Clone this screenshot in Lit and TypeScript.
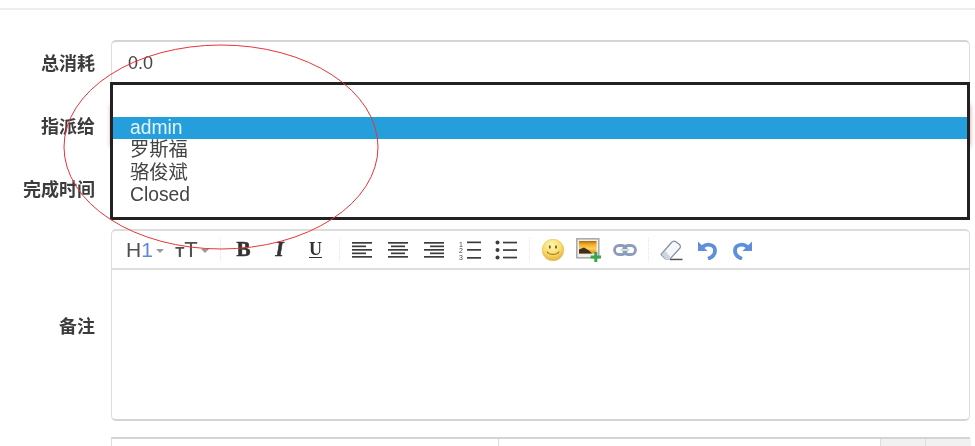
import { LitElement, html, css, svg } from "lit";
import { customElement } from "lit/decorators.js";

const line = (x: number, y: number, w: number, h = 1.7, c = "#3c3c3c") =>
  svg`<rect x=${x} y=${y} width=${w} height=${h} fill=${c}></rect>`;

const align = (kind: "l" | "c" | "r") => {
  const rows = [20, 14, 20, 14, 20];
  return html`<svg width="20" height="18" viewBox="0 0 20 18">
    ${rows.map((w, i) => line(kind === "l" ? 0 : kind === "c" ? (20 - w) / 2 : 20 - w, 1 + i * 3.5, w))}
  </svg>`;
};

const arrow = svg`
  <path d="M1 1.500V11h9.500z" fill="#5f8fdc"></path>
  <path d="M5.500 7C10 3 18 4.500 18 10.500 18 14.500 14.500 17.500 11 18.800" fill="none" stroke="#5f8fdc" stroke-width="3.800"></path>
`;

const icons = {
  ol: html`<svg width="22" height="20" viewBox="0 0 22 20">
    <text x="0" y="6.500" class="tiny">1</text><text x="0" y="13" class="tiny">2</text><text x="0" y="19.500" class="tiny">3</text>
    ${line(8, 1.500, 14)}${line(8, 9, 14)}${line(8, 17, 14)}
  </svg>`,
  ul: html`<svg width="22" height="20" viewBox="0 0 22 20">
    <circle cx="2.500" cy="2.500" r="2" fill="#3c3c3c"></circle><circle cx="2.500" cy="10" r="2" fill="#3c3c3c"></circle><circle cx="2.500" cy="17.500" r="2" fill="#3c3c3c"></circle>
    ${line(8, 1.700, 14)}${line(8, 9.200, 14)}${line(8, 16.700, 14)}
  </svg>`,
  smile: html`<svg width="24" height="24" viewBox="0 0 24 24">
    <defs><radialGradient id="sm" cx="45%" cy="30%" r="75%"><stop offset="0" stop-color="#fff6b8"></stop><stop offset=".55" stop-color="#f8dc6a"></stop><stop offset="1" stop-color="#e0aa35"></stop></radialGradient></defs>
    <circle cx="12" cy="12" r="10.800" fill="url(#sm)" stroke="#e6c05a" stroke-width=".6"></circle>
    <ellipse cx="8.800" cy="9" rx="1" ry="1.800" fill="#7a6018"></ellipse><ellipse cx="15" cy="9" rx="1" ry="1.800" fill="#7a6018"></ellipse>
    <path d="M6 13.500c2 3.800 10 3.800 12 0" fill="none" stroke="#a27c20" stroke-width="1.100"></path>
  </svg>`,
  image: html`<svg width="26" height="24" viewBox="0 0 26 24">
    <defs><linearGradient id="pic" x1="0" y1="0" x2="0" y2="1"><stop offset="0" stop-color="#a86c14"></stop><stop offset=".25" stop-color="#f2a81f"></stop><stop offset=".6" stop-color="#fcd05a"></stop><stop offset="1" stop-color="#e08d1a"></stop></linearGradient></defs>
    <rect x=".8" y=".8" width="22" height="19" fill="#efefef" stroke="#a8a8a8" stroke-width="1.500"></rect>
    <rect x="3" y="3" width="17.500" height="12.500" fill="url(#pic)"></rect>
    <path d="M3 15.500v-4l5-2 5 3 3 3z" fill="#3a2e1c"></path>
    <path d="M18.300 14h3v3.500h3.700v3h-3.700V24h-3v-3.500h-3.700v-3h3.700z" fill="#3ba54a"></path>
  </svg>`,
  link: html`<svg width="24" height="14" viewBox="0 0 24 14">
    <rect x="1.500" y="2.500" width="12" height="9" rx="4.500" fill="none" stroke="#8a9dbb" stroke-width="2.800"></rect>
    <rect x="10.500" y="2.500" width="12" height="9" rx="4.500" fill="none" stroke="#8a9dbb" stroke-width="2.800"></rect>
    <rect x="7.500" y="6" width="9" height="2" fill="#d5dce8"></rect>
  </svg>`,
  eraser: html`<svg width="23" height="22" viewBox="0 0 23 22">
    <path d="M1 15.500 11.500 3.500c1.300-1.500 3.200-1.500 4.700-.4l3 2.200c1.500 1.200 1.600 2.900.4 4.200L10 20H5.500z" fill="#f6f7fa" stroke="#7f8ea3" stroke-width="1.200"></path>
    <path d="M1.500 15.500 5.500 20H10l1-1.200-5.500-6.800z" fill="#cdd5e0"></path>
    <rect x="10" y="19.700" width="12.500" height="1.500" fill="#555"></rect>
  </svg>`,
  undo: html`<svg width="20" height="20" viewBox="0 0 20 20">${arrow}</svg>`,
  redo: html`<svg class="flip" width="20" height="20" viewBox="0 0 20 20">${arrow}</svg>`,
};

@customElement("app-root")
export class AppRoot extends LitElement {
  static styles = css`
    :host {
      display: block;
      position: relative;
      width: 975px;
      height: 446px;
      overflow: hidden;
      background: #fff;
      color: #444;
      font-family: "Liberation Sans", "Noto Sans CJK SC", sans-serif;
      filter: blur(0.5px);
    }
    .topline { height: 2px; margin-top: 8px; background: #eee; }
    .form { display: grid; grid-template-columns: 95px 859px; column-gap: 16px; row-gap: 18px; padding-top: 30px; align-items: center; }
    .label { font-size: 18px; font-weight: 700; color: #3c3c3c; text-align: right; }
    .lift { padding-bottom: 2px; }
    .input {
      height: 45px; box-sizing: border-box; background: #fff;
      border: 1px solid #ddd; border-top: 2px solid #d4d4d4; border-radius: 5px;
      padding: 0 16px; display: flex; align-items: center; font-size: 18px; color: #444;
    }
    .focus { border-color: #e0b4b4; box-shadow: 0 0 5px rgba(190, 60, 60, .55); }
    .editor { height: 192px; box-sizing: border-box; border: 1px solid #ddd; border-top-width: 2px; border-bottom: 2px solid #d4d4d4; border-radius: 5px; }
    .toolbar { height: 39px; box-sizing: border-box; border-bottom: 2px solid #ddd; padding-left: 9px; display: flex; align-items: center; }
    .drop { width: 48px; display: flex; align-items: center; justify-content: center; font-size: 21px; color: #505050; gap: 2px; }
    .drop + .drop { width: 46px; }
    .blue { color: #5c8ad8; }
    .small-t { font-size: 15px; font-weight: 700; }
    .big-t { font-size: 22px; }
    .caret { width: 0; height: 0; border: 4px solid transparent; border-top-color: #999; border-bottom: 0; margin-left: 1px; margin-top: 3px; }
    .sep { width: 1px; height: 24px; margin: 0 4.5px 0 5px; background-image: linear-gradient(#e4e4e4 50%, transparent 50%); background-size: 1px 2px; }
    .btn { width: 36px; height: 26px; display: flex; align-items: center; justify-content: center; color: #333; }
    .btn-b, .btn-i, .btn-u { font-family: "Liberation Serif", serif; font-weight: 700; }
    .btn-b { font-size: 21px; -webkit-text-stroke: 0.6px #333; }
    .btn-i { font-size: 21px; font-style: italic; -webkit-text-stroke: 0.6px #333; letter-spacing: 0; }
    .btn-u { font-size: 18px; text-decoration: underline; text-underline-offset: 2px; }
    .tiny { font-family: "Liberation Sans", sans-serif; font-size: 7px; fill: #444; }
    .flip { transform: scaleX(-1); }
    .bottom {
      display: grid; grid-template-columns: 387px 382px 45px 45px; margin: 16px 0 0 111px; width: 859px; height: 30px;
      border-top: 2px solid #d4d4d4; border-left: 1px solid #ddd; border-right: 1px solid #ddd; box-sizing: border-box;
    }
    .cell { border-right: 1px solid #ddd; }
    .cell.shade { background: #f1f1f1; }
    .cell:last-child { border-right: 0; }
    .listbox {
      position: absolute; left: 110px; top: 82px; width: 860px; height: 138px; box-sizing: border-box;
      border: 3px solid #222; background: #fff; padding-top: 32px; font-size: 19.3px; color: #444;
    }
    .opt { padding-left: 17px; height: 22.7px; line-height: 22px; }
    .opt.on { background: #259fdb; color: #e4f3fb; height: 22px; }
    .ink { position: absolute; left: 0; top: 0; pointer-events: none; }
  `;

  render() {
    return html`
      <div class="topline"></div>
      <div class="form">
        <div class="label lift">总消耗</div>
        <div class="input">0.0</div>
        <div class="label lift">指派给</div>
        <div class="input focus"></div>
        <div class="label lift">完成时间</div>
        <div class="input"></div>
        <div class="label">备注</div>
        <div class="editor">
          <div class="toolbar">
            <div class="drop"><span>H<span class="blue">1</span></span><i class="caret"></i></div>
            <div class="drop"><span><span class="small-t">T</span><span class="big-t">T</span></span><i class="caret"></i></div>
            <div class="sep"></div>
            <div class="btn btn-b">B</div>
            <div class="btn btn-i">I</div>
            <div class="btn btn-u">U</div>
            <div class="sep"></div>
            <div class="btn">${align("l")}</div>
            <div class="btn">${align("c")}</div>
            <div class="btn">${align("r")}</div>
            <div class="btn">${icons.ol}</div>
            <div class="btn">${icons.ul}</div>
            <div class="sep"></div>
            <div class="btn">${icons.smile}</div>
            <div class="btn">${icons.image}</div>
            <div class="btn">${icons.link}</div>
            <div class="sep"></div>
            <div class="btn">${icons.eraser}</div>
            <div class="btn">${icons.undo}</div>
            <div class="btn">${icons.redo}</div>
          </div>
        </div>
      </div>
      <div class="bottom">
        <div class="cell"></div>
        <div class="cell"></div>
        <div class="cell shade"></div>
        <div class="cell shade"></div>
      </div>
      <div class="listbox">
        <div class="opt on">admin</div>
        <div class="opt">罗斯福</div>
        <div class="opt">骆俊斌</div>
        <div class="opt">Closed</div>
      </div>
      <svg class="ink" width="975" height="446" viewBox="0 0 975 446">
        <ellipse cx="221" cy="147" rx="157" ry="102" fill="none" stroke="#e8343a" stroke-width="1"></ellipse>
      </svg>
    `;
  }
}
